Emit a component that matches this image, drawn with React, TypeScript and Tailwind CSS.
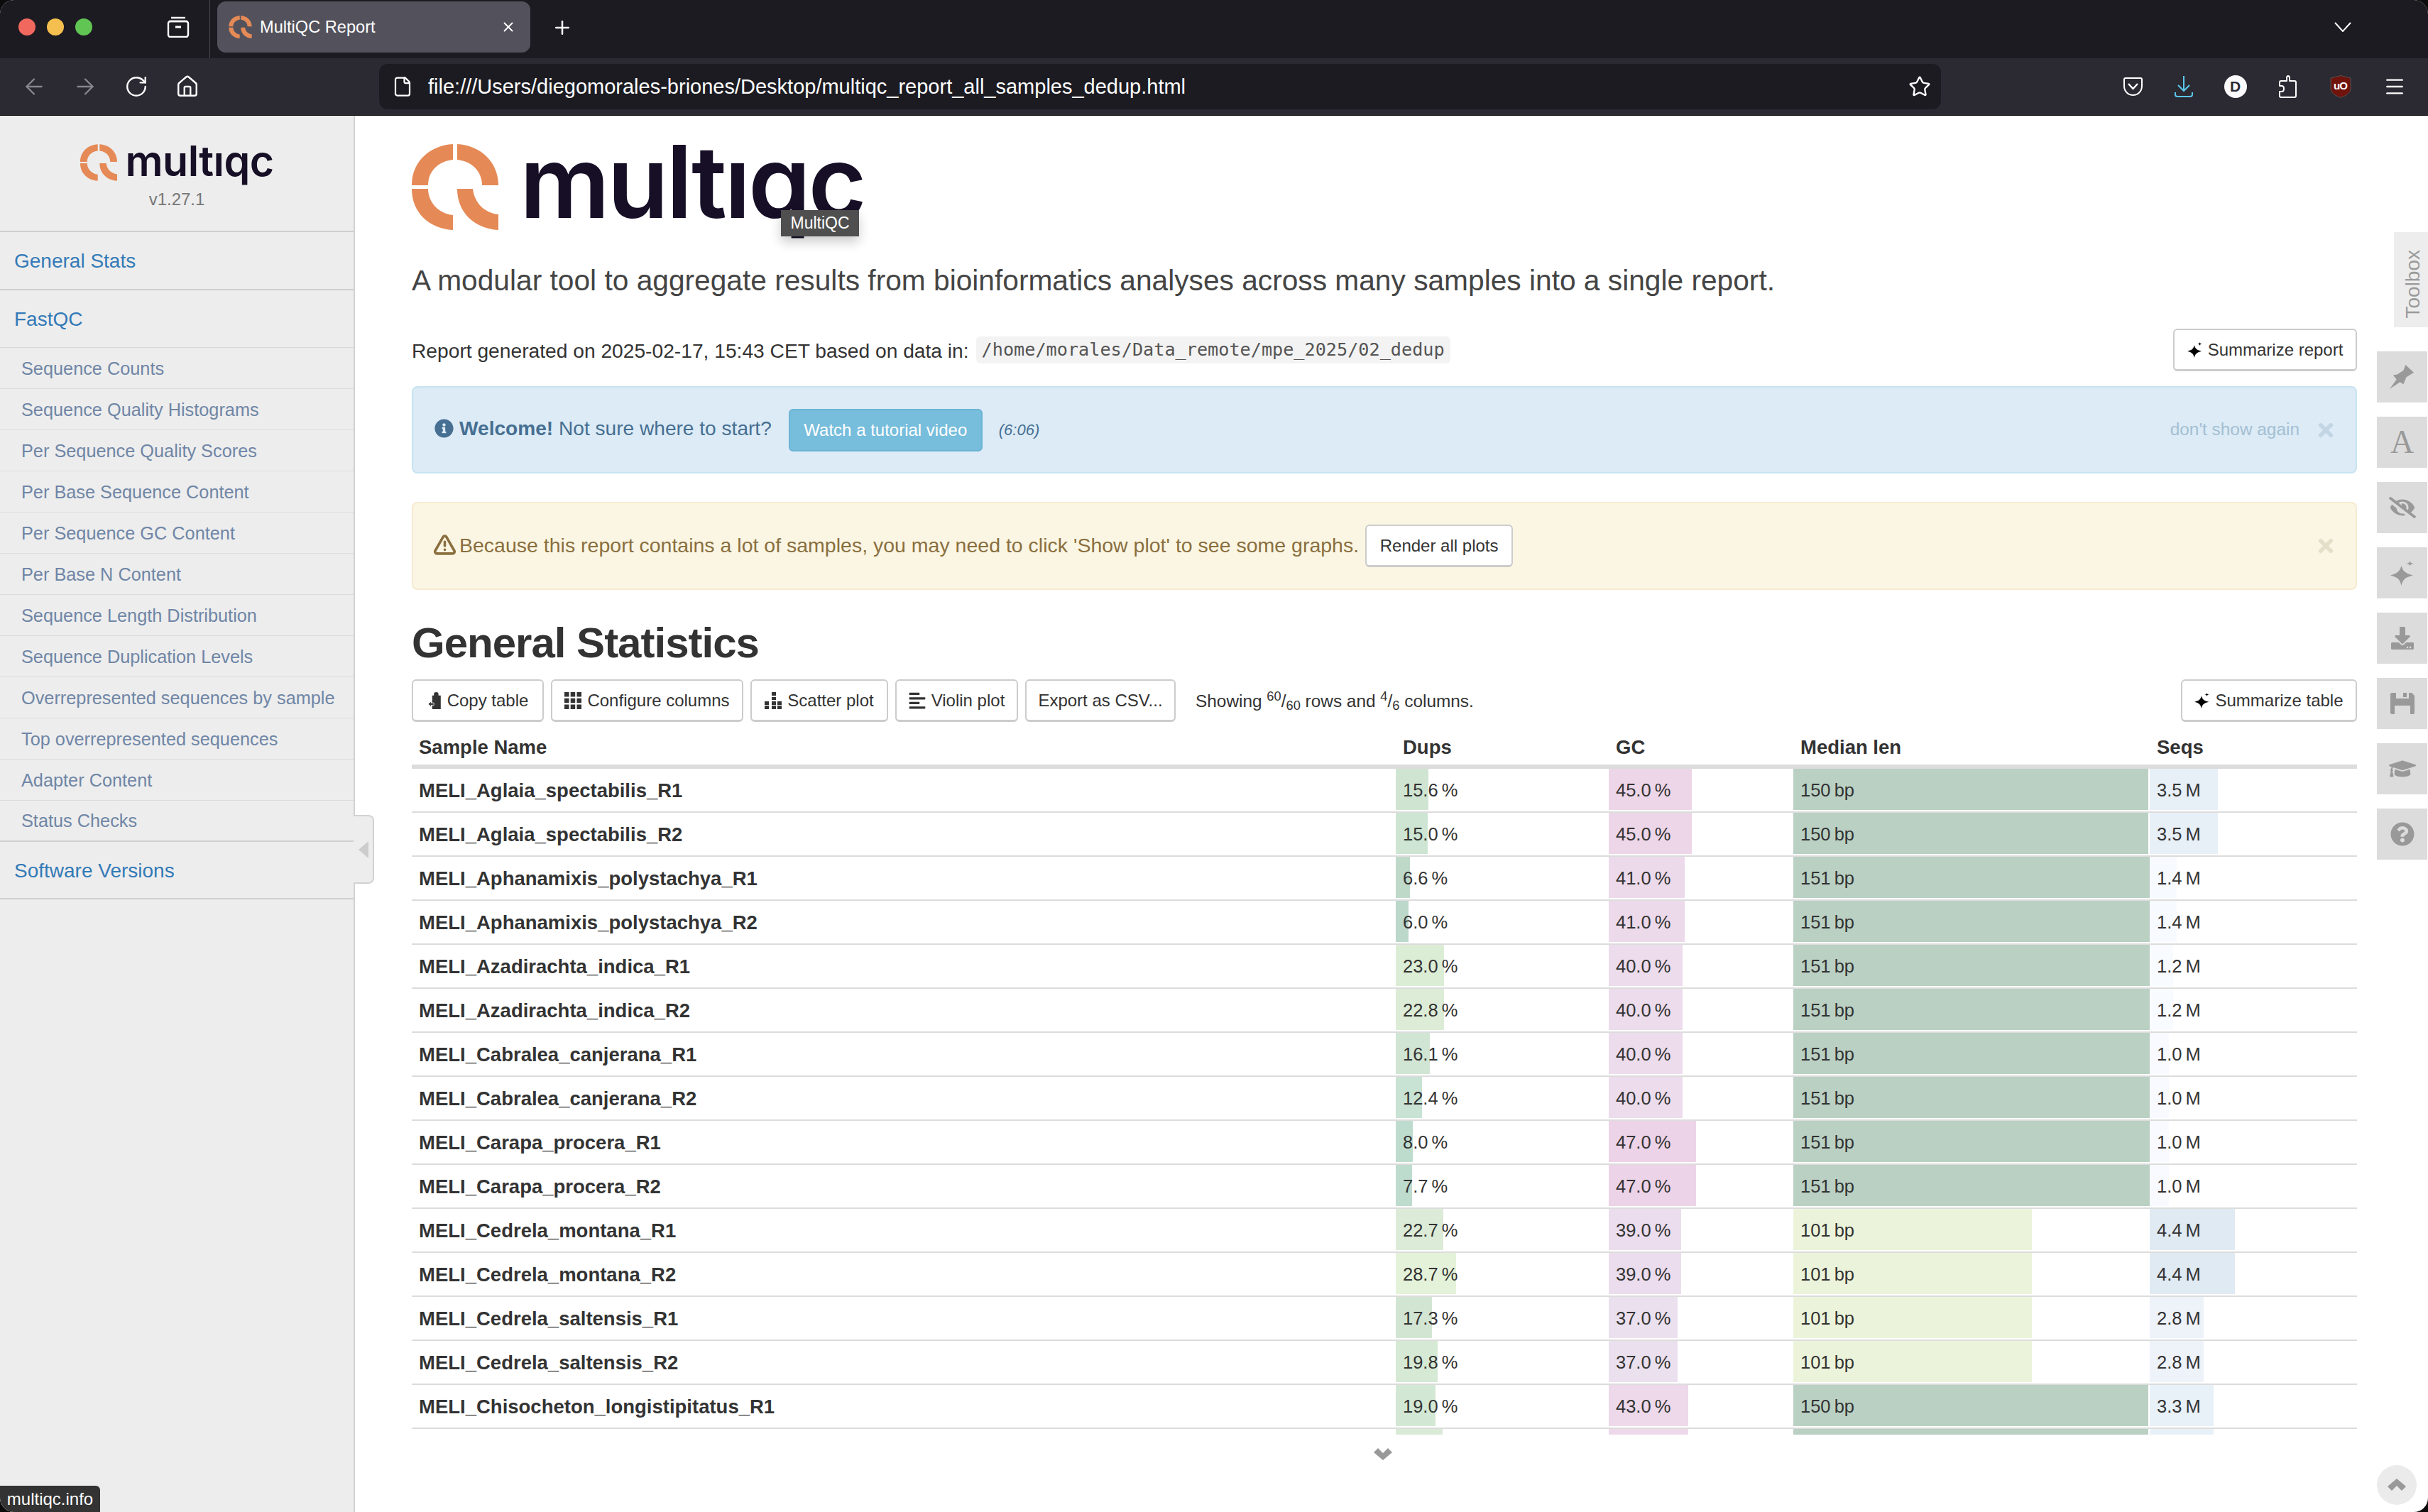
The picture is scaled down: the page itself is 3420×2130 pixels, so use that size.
import React from "react";
import {
  FaAlignLeft,
  FaDownload,
  FaEyeSlash,
  FaGraduationCap,
  FaInfoCircle,
  FaQuestionCircle,
  FaTimes,
} from "react-icons/fa";
import { ArrowLeft, ArrowRight, File, Home, Menu, Plus, RotateCw, Star, TriangleAlert, X } from "lucide-react";

type Row = {
  name: string;
  dups: number;
  dupsBg: string;
  gc: number;
  gcBg: string;
  len: number;
  lenBg: string;
  seqs: number;
  seqsBg: string;
};

const tocItems = [
  "Sequence Counts",
  "Sequence Quality Histograms",
  "Per Sequence Quality Scores",
  "Per Base Sequence Content",
  "Per Sequence GC Content",
  "Per Base N Content",
  "Sequence Length Distribution",
  "Sequence Duplication Levels",
  "Overrepresented sequences by sample",
  "Top overrepresented sequences",
  "Adapter Content",
  "Status Checks",
];

const rows: Row[] = [
  { name: "MELI_Aglaia_spectabilis_R1", dups: 15.6, dupsBg: "bg-[#cfe5d2]", gc: 45, gcBg: "bg-[#edd6e8]", len: 150, lenBg: "bg-[#b9d0c3]", seqs: 3.5, seqsBg: "bg-[#e7eff7]" },
  { name: "MELI_Aglaia_spectabilis_R2", dups: 15.0, dupsBg: "bg-[#cde5d2]", gc: 45, gcBg: "bg-[#edd6e8]", len: 150, lenBg: "bg-[#b9d0c3]", seqs: 3.5, seqsBg: "bg-[#e7eff7]" },
  { name: "MELI_Aphanamixis_polystachya_R1", dups: 6.6, dupsBg: "bg-[#bfd9c9]", gc: 41, gcBg: "bg-[#ecdaeb]", len: 151, lenBg: "bg-[#b9d0c3]", seqs: 1.4, seqsBg: "bg-[#f7faff]" },
  { name: "MELI_Aphanamixis_polystachya_R2", dups: 6.0, dupsBg: "bg-[#bcd8ca]", gc: 41, gcBg: "bg-[#ecdaeb]", len: 151, lenBg: "bg-[#b9d0c3]", seqs: 1.4, seqsBg: "bg-[#f7faff]" },
  { name: "MELI_Azadirachta_indica_R1", dups: 23.0, dupsBg: "bg-[#dcedd6]", gc: 40, gcBg: "bg-[#ecdcec]", len: 151, lenBg: "bg-[#b9d0c3]", seqs: 1.2, seqsBg: "bg-[#f8fbff]" },
  { name: "MELI_Azadirachta_indica_R2", dups: 22.8, dupsBg: "bg-[#dcecd6]", gc: 40, gcBg: "bg-[#ecdcec]", len: 151, lenBg: "bg-[#b9d0c3]", seqs: 1.2, seqsBg: "bg-[#f8fbff]" },
  { name: "MELI_Cabralea_canjerana_R1", dups: 16.1, dupsBg: "bg-[#d0e5d3]", gc: 40, gcBg: "bg-[#ecdcec]", len: 151, lenBg: "bg-[#b9d0c3]", seqs: 1.0, seqsBg: "bg-[#f9faff]" },
  { name: "MELI_Cabralea_canjerana_R2", dups: 12.4, dupsBg: "bg-[#c8e2d3]", gc: 40, gcBg: "bg-[#ecdcec]", len: 151, lenBg: "bg-[#b9d0c3]", seqs: 1.0, seqsBg: "bg-[#f9faff]" },
  { name: "MELI_Carapa_procera_R1", dups: 8.0, dupsBg: "bg-[#bedcce]", gc: 47, gcBg: "bg-[#edd3e7]", len: 151, lenBg: "bg-[#b9d0c3]", seqs: 1.0, seqsBg: "bg-[#f9faff]" },
  { name: "MELI_Carapa_procera_R2", dups: 7.7, dupsBg: "bg-[#bedcce]", gc: 47, gcBg: "bg-[#edd3e7]", len: 151, lenBg: "bg-[#b9d0c3]", seqs: 1.0, seqsBg: "bg-[#f9faff]" },
  { name: "MELI_Cedrela_montana_R1", dups: 22.7, dupsBg: "bg-[#dcebd7]", gc: 39, gcBg: "bg-[#ebdded]", len: 101, lenBg: "bg-[#ebf4da]", seqs: 4.4, seqsBg: "bg-[#dfeaf3]" },
  { name: "MELI_Cedrela_montana_R2", dups: 28.7, dupsBg: "bg-[#e4f2d9]", gc: 39, gcBg: "bg-[#ebdded]", len: 101, lenBg: "bg-[#ebf4da]", seqs: 4.4, seqsBg: "bg-[#dfeaf3]" },
  { name: "MELI_Cedrela_saltensis_R1", dups: 17.3, dupsBg: "bg-[#d2e5d3]", gc: 37, gcBg: "bg-[#ebe0ee]", len: 101, lenBg: "bg-[#ebf4da]", seqs: 2.8, seqsBg: "bg-[#eef2f9]" },
  { name: "MELI_Cedrela_saltensis_R2", dups: 19.8, dupsBg: "bg-[#d5e9d4]", gc: 37, gcBg: "bg-[#ebe0ee]", len: 101, lenBg: "bg-[#ebf4da]", seqs: 2.8, seqsBg: "bg-[#eef2f9]" },
  { name: "MELI_Chisocheton_longistipitatus_R1", dups: 19.0, dupsBg: "bg-[#d3e8d4]", gc: 43, gcBg: "bg-[#edd9ea]", len: 150, lenBg: "bg-[#b9d0c3]", seqs: 3.3, seqsBg: "bg-[#e8f0f8]" },
];

// top of the next row, the table is scrolled so only its bars show
const peek = { dups: 22.2, dupsBg: "bg-[#d9ebd6]", gc: 43, gcBg: "bg-[#edd9ea]", len: 150, lenBg: "bg-[#b9d0c3]", seqs: 3.3, seqsBg: "bg-[#e8f0f8]" };

function QIcon({ className }: { className: string }) {
  return (
    <svg viewBox="0 0 122 121" className={className} fill="#e58a56">
      <path d="M58 0C24 2 0 26 0 58H23C23 38 38 24 58 22Z" />
      <path d="M64 0C98 2 122 26 122 58H99C99 38 84 24 64 22Z" />
      <path d="M0 63H23C23 82 38 98 58 100V121C24 119 0 96 0 63Z" />
      <path d="M64 63H86C88 82 102 97 122 99V121C88 119 64 96 64 63Z" />
    </svg>
  );
}

function Sparkle({ className }: { className: string }) {
  return (
    <svg viewBox="0 0 34 36" className={className} fill="currentColor">
      <path d="M16 7C18 14 20 18 33 21C20 24 18 28 16 36C14 28 12 24 0 21C12 18 14 14 16 7Z" />
      <path d="M28.500 0C29 2.500 30 3.500 34 4C30 4.500 29 5.500 28.500 8C28 5.500 27 4.500 23 4C27 3.500 28 2.500 28.500 0Z" />
    </svg>
  );
}

function Btn({ children, className = "" }: { children: React.ReactNode; className?: string }) {
  return (
    <button className={`flex h-[60px] shrink-0 items-center gap-[8px] rounded-[6px] border-2 border-b-[3px] border-[#ccc] bg-white text-[24px] text-[#333] ${className}`}>
      {children}
    </button>
  );
}

function ToolButton({ children }: { children: React.ReactNode }) {
  return (
    <div className="flex h-[72px] w-[71px] items-center justify-center bg-[#dcdcdc] text-[#999]">
      {children}
    </div>
  );
}

function BarCell({ width, bg, text, col }: { width: number; bg: string; text: string; col: string }) {
  return (
    <div className={`relative h-full shrink-0 ${col}`}>
      <div className={`absolute left-0 top-0 bottom-[2px] ${bg}`} style={{ width }} />
      <div className="relative flex h-full items-center pl-[10px] text-[25.5px] text-[#333]">{text}</div>
    </div>
  );
}

function Browser() {
  return (
    <>
      <div className="flex h-[82px] shrink-0 items-start bg-[#1c1b22] text-white">
        <div className="flex h-[76px] items-center gap-[16px] pl-[26px]">
          <span className="h-[24px] w-[24px] rounded-full bg-[#f1685e]" />
          <span className="h-[24px] w-[24px] rounded-full bg-[#f5bf4f]" />
          <span className="h-[24px] w-[24px] rounded-full bg-[#61c554]" />
        </div>
        <svg viewBox="0 0 32 30" className="ml-[105px] mt-[23px] h-[30px] w-[32px]" fill="none" stroke="white" strokeWidth="2.4">
          <path d="M6 2H26" />
          <path d="M3 7H29" />
          <rect x="2" y="7" width="28" height="22" rx="3" />
          <path d="M12 15H20" strokeWidth="3" />
        </svg>
        <div className="ml-[28px] h-[82px] w-px bg-[#4a4950]" />
        <div className="ml-[10px] mt-[2px] flex h-[72px] w-[441px] items-center rounded-[12px] bg-[#53525c] pl-[16px]">
          <QIcon className="h-[32px] w-[33px]" />
          <span className="ml-[11px] pt-[2px] text-[23.6px]">MultiQC Report</span>
          <X className="ml-auto mr-[20px] h-[22px] w-[22px]" strokeWidth={2} />
        </div>
        <Plus className="ml-[30px] mt-[24px] h-[30px] w-[30px]" strokeWidth={2} />
        <svg viewBox="0 0 24 14" className="ml-auto mr-[108px] mt-[31px] h-[14px] w-[24px]" fill="none" stroke="white" strokeWidth="2">
          <path d="M1 1L12 13L23 1" />
        </svg>
      </div>
      <div className="flex h-[81px] shrink-0 items-center border-b border-black bg-[#2b2a33] pb-[1px] pl-[12px] pr-[11px] text-white">
        <div className="flex h-[72px] w-[72px] items-center justify-center"><ArrowLeft className="h-[36px] w-[36px] text-[#85858b]" strokeWidth={1.6} /></div>
        <div className="flex h-[72px] w-[72px] items-center justify-center"><ArrowRight className="h-[36px] w-[36px] text-[#85858b]" strokeWidth={1.6} /></div>
        <div className="flex h-[72px] w-[72px] items-center justify-center"><RotateCw className="h-[34px] w-[34px]" strokeWidth={1.7} /></div>
        <div className="flex h-[72px] w-[72px] items-center justify-center"><Home className="h-[34px] w-[34px]" strokeWidth={1.7} /></div>
        <div className="ml-[234px] flex h-[64px] w-[2200px] items-center rounded-[12px] bg-[#1c1b22] pl-[18px] pr-[14px]">
          <File className="h-[32px] w-[30px]" strokeWidth={1.8} />
          <span className="ml-[21px] pt-[2px] text-[29px]">file:///Users/diegomorales-briones/Desktop/multiqc_report_all_samples_dedup.html</span>
          <Star className="ml-auto h-[32px] w-[32px]" strokeWidth={1.8} />
        </div>
        <div className="ml-auto flex items-center">
          <div className="flex h-[72px] w-[71px] items-center justify-center">
            <svg viewBox="0 0 27 26" className="h-[26px] w-[27px]" fill="none" stroke="white" strokeWidth="2">
              <path d="M3 1H24C25 1 26 2 26 3V12C26 20 20 25 13.500 25C7 25 1 20 1 12V3C1 2 2 1 3 1Z" />
              <path d="M7 9L13.500 16L20 9" strokeWidth="2.400" />
            </svg>
          </div>
          <div className="flex h-[72px] w-[71px] items-center justify-center">
            <svg viewBox="0 0 26 30" className="h-[30px] w-[26px]" fill="none" stroke="#5bc8ee" strokeWidth="2">
              <path d="M13 0V21" />
              <path d="M5 13L13 21L21 13" />
              <path d="M1 23V26C1 28 2 29 4 29H22C24 29 25 28 25 26V23" />
            </svg>
          </div>
          <div className="flex h-[72px] w-[75px] items-center justify-center">
            <span className="flex h-[32px] w-[32px] items-center justify-center rounded-full bg-[#fbfbfe] text-[21px] font-bold text-[#2b2a33]">D</span>
          </div>
          <div className="flex h-[72px] w-[71px] items-center justify-center">
            <svg viewBox="0 0 26 32" className="h-[32px] w-[26px]" fill="none" stroke="white" strokeWidth="2" strokeLinejoin="round">
              <path d="M9 8H12V4C12 2 13 1 14 1C15 1 16 2 16 4V8H23C24 8 25 9 25 10V29C25 30 24 31 23 31H4C3 31 2 30 2 29V23H5C7 23 8 21 8 19C8 17 7 15 5 15H2V10C2 9 3 8 4 8Z" />
            </svg>
          </div>
          <div className="relative flex h-[72px] w-[79px] items-center justify-center">
            <svg viewBox="0 0 30 32" className="h-[32px] w-[30px]" fill="#6f130c" stroke="#55504e" strokeWidth="1">
              <path d="M15 0.500L29 4V19C29 25 22 29 15 31.500C8 29 1 25 1 19V4Z" />
            </svg>
            <span className="absolute text-[15px] font-bold tracking-[-1px] text-white">uO</span>
          </div>
          <div className="flex h-[72px] w-[73px] items-center justify-center">
            <Menu className="h-[32px] w-[32px]" strokeWidth={1.8} />
          </div>
        </div>
      </div>
    </>
  );
}

function Sidebar() {
  return (
    <aside className="w-[500px] shrink-0 border-r-2 border-[#d2d2d2] bg-[#ededed]">
      <div className="flex h-[164px] flex-col items-center border-b-2 border-[#cfcfcf] pt-[40px]">
        <div className="flex h-[52px] items-center gap-[12px]">
          <QIcon className="h-[52px] w-[52px]" />
          <span className="mb-[6px] font-['Inter',sans-serif] text-[59px] leading-none font-semibold tracking-[-0.6px] text-[#160f26]">multıqc</span>
        </div>
        <div className="mt-[11px] text-[24px] leading-[30px] text-[#777]">v1.27.1</div>
      </div>
      <div className="flex h-[82px] items-center border-b-2 border-[#cfcfcf] pl-[20px] pt-[2px] text-[28px] text-[#337ab7]">General Stats</div>
      <div className="flex h-[81px] items-center border-b border-[#d8d8d8] pl-[20px] pt-[2px] text-[28px] text-[#337ab7]">FastQC</div>
      {tocItems.map((item, i) => (
        <div
          key={item}
          className={`flex h-[58px] items-center pl-[30px] pt-[2px] text-[25.3px] text-[#6f86a6] ${i === tocItems.length - 1 ? "border-b-2 border-[#cfcfcf]" : "border-b border-[#dcdcdc]"}`}
        >
          {item}
        </div>
      ))}
      <div className="flex h-[81px] items-center border-b-2 border-[#cfcfcf] pl-[20px] pt-[2px] text-[28px] text-[#337ab7]">Software Versions</div>
    </aside>
  );
}

function Report() {
  return (
    <main className="relative w-[2920px] pl-[80px] pr-[100px] pt-[40px] text-[#333]">
      <div className="relative flex h-[121px] items-center gap-[30px]">
        <QIcon className="h-[121px] w-[122px]" />
        <span className="mb-[16px] font-['Inter',sans-serif] text-[141px] leading-none font-semibold tracking-[-3.4px] text-[#160f26]">multıqc</span>
        <div className="absolute left-[520px] top-[93px] flex h-[37px] w-[110px] items-center justify-center bg-[#4f4f4f] text-[23px] text-white shadow-[0_8px_16px_rgba(0,0,0,0.2)]">MultiQC</div>
      </div>

      <p className="mt-[46px] h-[50px] text-[40.7px] leading-[50px] font-light text-[#444]">
        A modular tool to aggregate results from bioinformatics analyses across many samples into a single report.
      </p>

      <div className="mt-[44px] flex h-[58px] items-center text-[28.2px]">
        <span className="pt-[2px]">Report generated on 2025-02-17, 15:43 CET based on data in:</span>
        <code className="ml-[10px] flex h-[38px] items-center rounded-[6px] bg-[#f3f3f3] px-[8px] font-['DejaVu_Sans_Mono',monospace] text-[25.2px] text-[#555]">/home/morales/Data_remote/mpe_2025/02_dedup</code>
        <Btn className="ml-auto w-[259px] justify-center">
          <Sparkle className="h-[22px] w-[21px] text-black" />
          Summarize report
        </Btn>
      </div>

      <div className="mt-[22px] flex h-[123px] items-center rounded-[8px] border-2 border-[#c6e4f0] bg-[#dcebf6] pl-[30px] pr-[31px] text-[#466f92]">
        <FaInfoCircle className="mb-[4px] h-[27px] w-[27px]" />
        <span className="mb-[2px] ml-[8px] text-[28.1px]"><b>Welcome!</b> Not sure where to start?</span>
        <button className="ml-[24px] flex h-[60px] w-[273px] items-center justify-center rounded-[6px] border-2 border-[#6cb4d6] bg-[#77bddc] text-[24px] text-white">Watch a tutorial video</button>
        <i className="ml-[23px] text-[22px]">(6:06)</i>
        <span className="ml-auto text-[24.4px] text-[#a3bfd2]">don't show again</span>
        <FaTimes className="ml-[26px] h-[30px] w-[22px] text-[#c2d5e3]" />
      </div>

      <div className="mt-[40px] flex h-[124px] items-center rounded-[8px] border-2 border-[#f6ead0] bg-[#fbf6e3] pl-[28px] pr-[31px] text-[#8a6f3f]">
        <TriangleAlert className="mb-[4px] h-[33px] w-[33px]" strokeWidth={2.6} />
        <span className="mb-[2px] ml-[4px] text-[28.5px]">Because this report contains a lot of samples, you may need to click 'Show plot' to see some graphs.</span>
        <Btn className="ml-[9px] w-[208px] justify-center">Render all plots</Btn>
        <FaTimes className="ml-auto h-[30px] w-[22px] text-[#e3dfc9]" />
      </div>

      <h1 className="mt-[41px] h-[68px] text-[60px] leading-[68px] font-bold tracking-[-1px]">General Statistics</h1>

      <div className="mt-[17px] flex h-[60px] items-center gap-[10px]">
        <Btn className="w-[186px] justify-center">
          <svg viewBox="0 0 22 30" className="h-[24px] w-[20px]" fill="#333">
            <path d="M7 6H10V3C10 1 12 0 14 0C16 0 18 1 18 3V6H22V30H7Z" />
            <path d="M0 21L5 16V19H10V23H5V26Z" stroke="white" strokeWidth="1" />
          </svg>
          Copy table
        </Btn>
        <Btn className="w-[271px] justify-center">
          <svg viewBox="0 0 24 24" className="h-[24px] w-[24px]" fill="#333">
            <path d="M0 0H6.500V6.500H0ZM8.700 0H15.200V6.500H8.700ZM17.500 0H24V6.500H17.500ZM0 8.700H6.500V15.200H0ZM8.700 8.700H15.200V15.200H8.700ZM17.500 8.700H24V15.200H17.500ZM0 17.500H6.500V24H0ZM8.700 17.500H15.200V24H8.700ZM17.500 17.500H24V24H17.500Z" />
          </svg>
          Configure columns
        </Btn>
        <Btn className="w-[194px] justify-center">
          <svg viewBox="0 0 24 24" className="h-[26px] w-[24px]" fill="#333">
            <path d="M10 0H16V5H10ZM10 7H16V11H10ZM0 13H6V18H0ZM10 13H16V18H10ZM18 13H24V18H18ZM0 19H6V24H0ZM10 19H16V24H10ZM18 19H24V24H18Z" />
          </svg>
          Scatter plot
        </Btn>
        <Btn className="w-[173px] justify-center">
          <FaAlignLeft className="h-[26px] w-[24px]" />
          Violin plot
        </Btn>
        <Btn className="w-[212px] justify-center">Export as CSV...</Btn>
        <span className="ml-[18px] pt-[2px] text-[24.4px]">
          Showing <sup>60</sup>/<sub>60</sub> rows and <sup>4</sup>/<sub>6</sub> columns.
        </span>
        <Btn className="ml-auto w-[248px] justify-center">
          <Sparkle className="h-[22px] w-[21px] text-black" />
          Summarize table
        </Btn>
      </div>

      <div className="h-[1004px] overflow-hidden">
        <div className="flex h-[66px] items-center border-b-[6px] border-[#dcdcdc] pt-[11px] text-[27.5px] font-bold">
          <div className="w-[1386px] shrink-0 pl-[10px]">Sample Name</div>
          <div className="w-[300px] shrink-0 pl-[10px]">Dups</div>
          <div className="w-[260px] shrink-0 pl-[10px]">GC</div>
          <div className="w-[502px] shrink-0 pl-[10px]">Median len</div>
          <div className="w-[292px] shrink-0 pl-[10px]">Seqs</div>
        </div>
        {rows.map((r) => (
          <div key={r.name} className="flex h-[62px] border-b-2 border-[#dcdcdc]">
            <div className="flex w-[1386px] shrink-0 items-center pl-[10px] pt-[1px] text-[27.5px] font-bold">{r.name}</div>
            <BarCell col="w-[300px]" width={r.dups * 2.97} bg={r.dupsBg} text={`${r.dups.toFixed(1)}\u2009%`} />
            <BarCell col="w-[260px]" width={r.gc * 2.61} bg={r.gcBg} text={`${r.gc.toFixed(1)}\u2009%`} />
            <BarCell col="w-[502px]" width={r.len * 3.33} bg={r.lenBg} text={`${r.len}\u2009bp`} />
            <BarCell col="w-[292px]" width={r.seqs * 27.3} bg={r.seqsBg} text={`${r.seqs.toFixed(1)}\u2009M`} />
          </div>
        ))}
        <div className="flex h-[62px]">
          <div className="w-[1386px] shrink-0" />
          <BarCell col="w-[300px]" width={peek.dups * 2.97} bg={peek.dupsBg} text="" />
          <BarCell col="w-[260px]" width={peek.gc * 2.61} bg={peek.gcBg} text="" />
          <BarCell col="w-[502px]" width={peek.len * 3.33} bg={peek.lenBg} text="" />
          <BarCell col="w-[292px]" width={peek.seqs * 27.3} bg={peek.seqsBg} text="" />
        </div>
      </div>

      <svg viewBox="0 0 26 18" className="mt-[18px] ml-[1355px] h-[18px] w-[26px]" fill="#999">
        <path d="M0 7L6 1L13 8L20 1L26 7L13 18Z" />
      </svg>

      <div className="absolute right-0 top-[164px] flex h-[134px] w-[48px] items-center justify-center bg-[#ededed] pl-[6px] pt-[12px]">
        <span className="rotate-180 text-[28px] text-[#9a9a9a] [writing-mode:vertical-rl]">Toolbox</span>
      </div>
      <div className="absolute right-px top-[332px] flex flex-col gap-[20px]">
        <ToolButton>
          <svg viewBox="0 0 36 36" className="h-[35px] w-[35px]" fill="currentColor">
            <path d="M0 35L15 25L20 28L24 18L35 11L23 0L20 8L11 14L5 15L10 21Z" />
          </svg>
        </ToolButton>
        <ToolButton><span className="font-['Liberation_Serif',serif] text-[46px] leading-none">A</span></ToolButton>
        <ToolButton><FaEyeSlash className="h-[32px] w-[38px]" /></ToolButton>
        <ToolButton><Sparkle className="h-[35px] w-[33px]" /></ToolButton>
        <ToolButton><FaDownload className="h-[32px] w-[32px]" /></ToolButton>
        <ToolButton>
          <svg viewBox="0 0 34 30" className="h-[30px] w-[34px]" fill="currentColor">
            <path d="M0 2C0 1 1 0 2 0H8V8H26V0H30L34 4V28C34 29 33 30 32 30H28V18H6V30H2C1 30 0 29 0 28ZM18 0H23V6H18Z" />
          </svg>
        </ToolButton>
        <ToolButton><FaGraduationCap className="h-[32px] w-[38px]" /></ToolButton>
        <ToolButton><FaQuestionCircle className="h-[34px] w-[34px]" /></ToolButton>
      </div>
      <div className="absolute bottom-[10px] right-[16px] flex h-[56px] w-[56px] items-center justify-center rounded-full bg-[#ebebeb]">
        <svg viewBox="0 0 26 18" className="h-[18px] w-[26px]" fill="#999">
          <path d="M0 11L6 17L13 10L20 17L26 11L13 0Z" />
        </svg>
      </div>
    </main>
  );
}

export default function App() {
  return (
    <div className="h-[2130px] w-[3420px] overflow-hidden bg-[#0c0c0c] font-['Liberation_Sans',Arial,sans-serif]">
      <div className="relative flex h-full flex-col overflow-hidden rounded-[20px] bg-white">
        <Browser />
        <div className="flex min-h-0 flex-1">
          <Sidebar />
          <Report />
        </div>
        {/* collapse handle and footer tag sit on top of the sidebar */}
        <div className="absolute left-[498px] top-[1148px] flex h-[97px] w-[29px] items-center justify-center rounded-r-[8px] border-2 border-l-0 border-[#d2d2d2] bg-[#ededed]">
          <div className="h-0 w-0 border-y-[12px] border-r-[14px] border-y-transparent border-r-[#ccc]" />
        </div>
        <div className="absolute bottom-0 left-0 flex h-[37px] w-[141px] items-center justify-center rounded-tr-[6px] bg-[#333] text-[24px] text-white">multiqc.info</div>
      </div>
    </div>
  );
}
